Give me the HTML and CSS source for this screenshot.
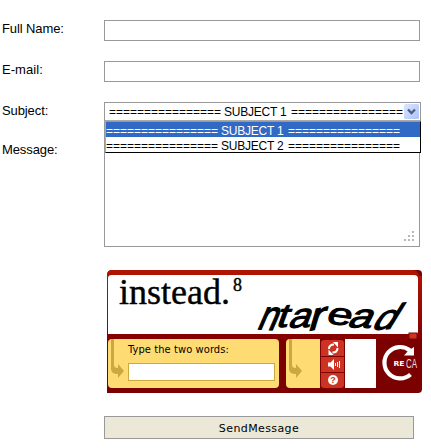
FILE: index.html
```html
<!DOCTYPE html>
<html lang="en">
<head>
<meta charset="utf-8">
<title>Contact form</title>
<link rel="stylesheet" href="styles.css">
</head>
<body>
<form class="form">
  <div class="row"><label class="label name">Full Name:</label><div class="field"></div></div>
  <div class="row"><label class="label email">E-mail:</label><div class="field"></div></div>
  <div class="row subject">
    <label class="label">Subject:</label>
    <div class="select">
      <div class="value"><span>================</span><span class="word">SUBJECT 1</span><span>================</span></div>
      <svg class="arrow" width="15" height="15" viewBox="0 0 15 15">
        <defs><linearGradient id="blue" x1="0" y1="0" x2="1" y2="1"><stop offset="0" stop-color="#dbe5ff"/><stop offset="1" stop-color="#adc3f9"/></linearGradient></defs>
        <rect width="15" height="15" rx="1.5" fill="url(#blue)"/>
        <path d="M4 5.5l3.5 3.5L11 5.5" fill="none" stroke="#4d6185" stroke-width="2.4"/>
      </svg>
      <div class="options">
        <div class="option selected"><span>================</span><span class="word">SUBJECT 1</span><span>================</span></div>
        <div class="option"><span>================</span><span class="word">SUBJECT 2</span><span>================</span></div>
      </div>
    </div>
  </div>
  <div class="row message">
    <label class="label">Message:</label>
    <div class="textarea">
      <svg width="10" height="10" viewBox="0 0 10 10" fill="#b8b8b8"><path d="M8 0h2v2H8zM4 4h2v2H4zM8 4h2v2H8zM0 8h2v2H0zM4 8h2v2H4zM8 8h2v2H8z"/></svg>
    </div>
  </div>
  <div class="captcha">
    <svg class="challenge" width="315" height="69" viewBox="0 0 315 69">
      <defs><linearGradient id="red" x1="0" y1="0" x2="0" y2="1"><stop offset="0" stop-color="#b01500"/><stop offset="1" stop-color="#850000"/></linearGradient></defs>
      <path d="M0 69V5Q0 0 5 0H306Q311 0 312 6H315V69Z" fill="url(#red)"/>
      <path d="M1 64V8Q1 5 5 5H307Q311 5 311 9V62Q311 64 309 64Z" fill="#fff"/>
      <rect x="302" y="63" width="8" height="6" fill="#cc3322" stroke="#850000"/>
      <text class="printed" x="12" y="33.500" textLength="111" lengthAdjust="spacingAndGlyphs">instead.</text>
      <text class="note" x="126" y="20.500">8</text>
      <g class="warped">
        <text transform="matrix(.98 .06 -.52 1.2 149 59)">n</text>
        <text transform="matrix(1.2 -.02 -.35 .98 168 57)">t</text>
        <text transform="matrix(1.15 -.06 -.4 1.02 180 58)">a</text>
        <text transform="matrix(1.35 -.22 -.35 1.2 200 61)">r</text>
        <text transform="matrix(1.3 .16 -.3 .88 218 53)">e</text>
        <text transform="matrix(1.25 .04 -.5 .98 239 57)">a</text>
        <text transform="matrix(1.18 -.07 -.66 1.06 263 60)">d</text>
      </g>
    </svg>
    <div class="controls">
      <div class="answer">
        <svg class="hook" width="16" height="40" viewBox="0 0 16 40"><path d="M3 0H6V26Q6 29 10 29V25L16 32L10 39V35Q3 35 3 30Z" fill="#cca940"/></svg>
        <div class="entry"><span>Type the two words:</span><div class="answer-input"></div></div>
      </div>
      <div class="tail"><svg class="hook" width="16" height="40" viewBox="0 0 16 40"><path d="M3 0H6V26Q6 29 10 29V25L16 32L10 39V35Q3 35 3 30Z" fill="#cca940"/></svg></div>
      <div class="buttons">
        <svg width="23" height="16" viewBox="0 0 23 16"><g fill="none" stroke="#fff" stroke-width="2"><path d="M8 9Q8 4.500 13 4.500M16.500 8Q16.500 12.500 11.500 12.500"/></g><path d="M12 2H17V7.500ZM12.500 15H7.500V9.500Z" fill="#fff"/></svg>
        <svg width="23" height="15" viewBox="0 0 23 15"><path d="M7 5.500H9.500L13 2V13L9.500 9.500H7Z" fill="#fff"/><path d="M14.500 6v3M16.500 5v5M18.500 4v7" stroke="#fff"/></svg>
        <svg width="23" height="15" viewBox="0 0 23 15"><circle cx="12" cy="7" r="5" fill="#fff"/><text x="12" y="10.300" text-anchor="middle" class="help">?</text></svg>
      </div>
      <div class="blank"></div>
      <svg class="logo" width="42" height="49" viewBox="0 0 42 49">
        <path d="M30 11.500A15.700 15.700 0 1 0 30.500 35.500" fill="none" stroke="#fff" stroke-width="4.200"/>
        <path d="M24 16.500L28.500 11.500L34 8V16.500Z" fill="#fff"/>
        <text x="13.500" y="27" class="re" textLength="11" lengthAdjust="spacingAndGlyphs">RE</text>
        <text x="26" y="28.500" class="ca" textLength="11" lengthAdjust="spacingAndGlyphs">CA</text>
      </svg>
    </div>
  </div>
  <div class="send">SendMessage</div>
</form>
</body>
</html>
```
FILE: styles.css
```css
* { box-sizing: border-box; }
body { margin: 0; background: #fff; color: #000; font: 13px/15px "Liberation Sans", sans-serif; overflow: hidden; }
svg { display: block; }
.form { width: 431px; height: 448px; padding-top: 20px; }
.row { display: grid; grid-template-columns: 102px 316px; margin-left: 2px; height: 41px; }
.label { padding-top: 1px; letter-spacing: -.1px; }
.email { letter-spacing: .05px; }
.field { height: 21px; border: 1px solid #999; }
.subject { height: 20px; }
.select { position: relative; display: flex; width: 317px; height: 20px; padding: 2px 2px 0 4px; border: 1px solid #999; border-bottom: 2px solid #aaa; font-size: 12px; }
.value, .option { display: flex; white-space: nowrap; }
.value { width: 295px; overflow: hidden; line-height: 15px; }
.value span, .option span { flex: none; width: 112px; letter-spacing: -.01px; }
.value .word, .option .word { width: 70px; padding-left: 3px; letter-spacing: -.22px; }
.arrow { position: absolute; right: 1px; top: 1px; }
.options { position: absolute; z-index: 1; left: 0; top: 18px; width: 316px; height: 32px; border: 1px solid #000; border-top: 1px solid #999; border-left-color: #aaa; background: #fff; }
.option { height: 15px; line-height: 19px; }
.selected { background: #316ac5; color: #fff; }
.message { height: 125px; }
.message .label { padding-top: 20px; }
.textarea { display: flex; justify-content: flex-end; align-items: flex-end; height: 125px; padding: 5px; border: 1px solid #999; border-top: 0; }
.captcha { width: 315px; height: 123px; margin: 23px 0 23px 107px; border-radius: 5px 4px 4px 0; background: #7b0000; }
.printed { font: 36px "Liberation Serif", serif; stroke: #000; stroke-width: .4px; }
.note { font: 18px "Liberation Serif", serif; stroke: #000; stroke-width: .4px; }
.warped text { font: 34px "Liberation Sans", sans-serif; stroke: #000; stroke-width: 1.1px; }
.controls { display: flex; height: 49px; padding-left: 1px; }
.answer { display: flex; width: 171px; height: 49px; margin-right: 7px; border-radius: 4px; background: #ffdc73; }
.hook { flex: none; }
.entry { padding: 4px 0 0 4px; font: 11px/14px "DejaVu Sans Condensed", "DejaVu Sans", sans-serif; letter-spacing: .1px; }
.answer-input { width: 147px; height: 18px; margin-top: 6px; border: 1px solid #cca940; background: #fff; }
.tail { width: 34px; border-radius: 4px 0 0 4px; background: #ffdc73; }
.buttons { display: flex; flex-direction: column; gap: 1px; width: 23px; margin: 1px 1px 0; }
.buttons svg { background: #cc3322; }
.buttons svg:first-child { border-radius: 3px 3px 0 0; }
.buttons svg:last-child { border-radius: 0 0 3px 3px; }
.help { font: bold 9px "Liberation Sans", sans-serif; fill: #cc3322; }
.blank { width: 31px; background: #fff; }
.logo { flex: none; margin-left: 4px; }
.re { font: bold 7px "DejaVu Sans", sans-serif; fill: #fff; }
.ca { font: 12px "Liberation Sans", sans-serif; fill: #f4dede; }
.send { width: 310px; height: 23px; margin-left: 104px; border: 1px solid #999; background: #ebe8d7; text-align: center; font: 11px/24px "DejaVu Sans", sans-serif; letter-spacing: .4px; }
```
